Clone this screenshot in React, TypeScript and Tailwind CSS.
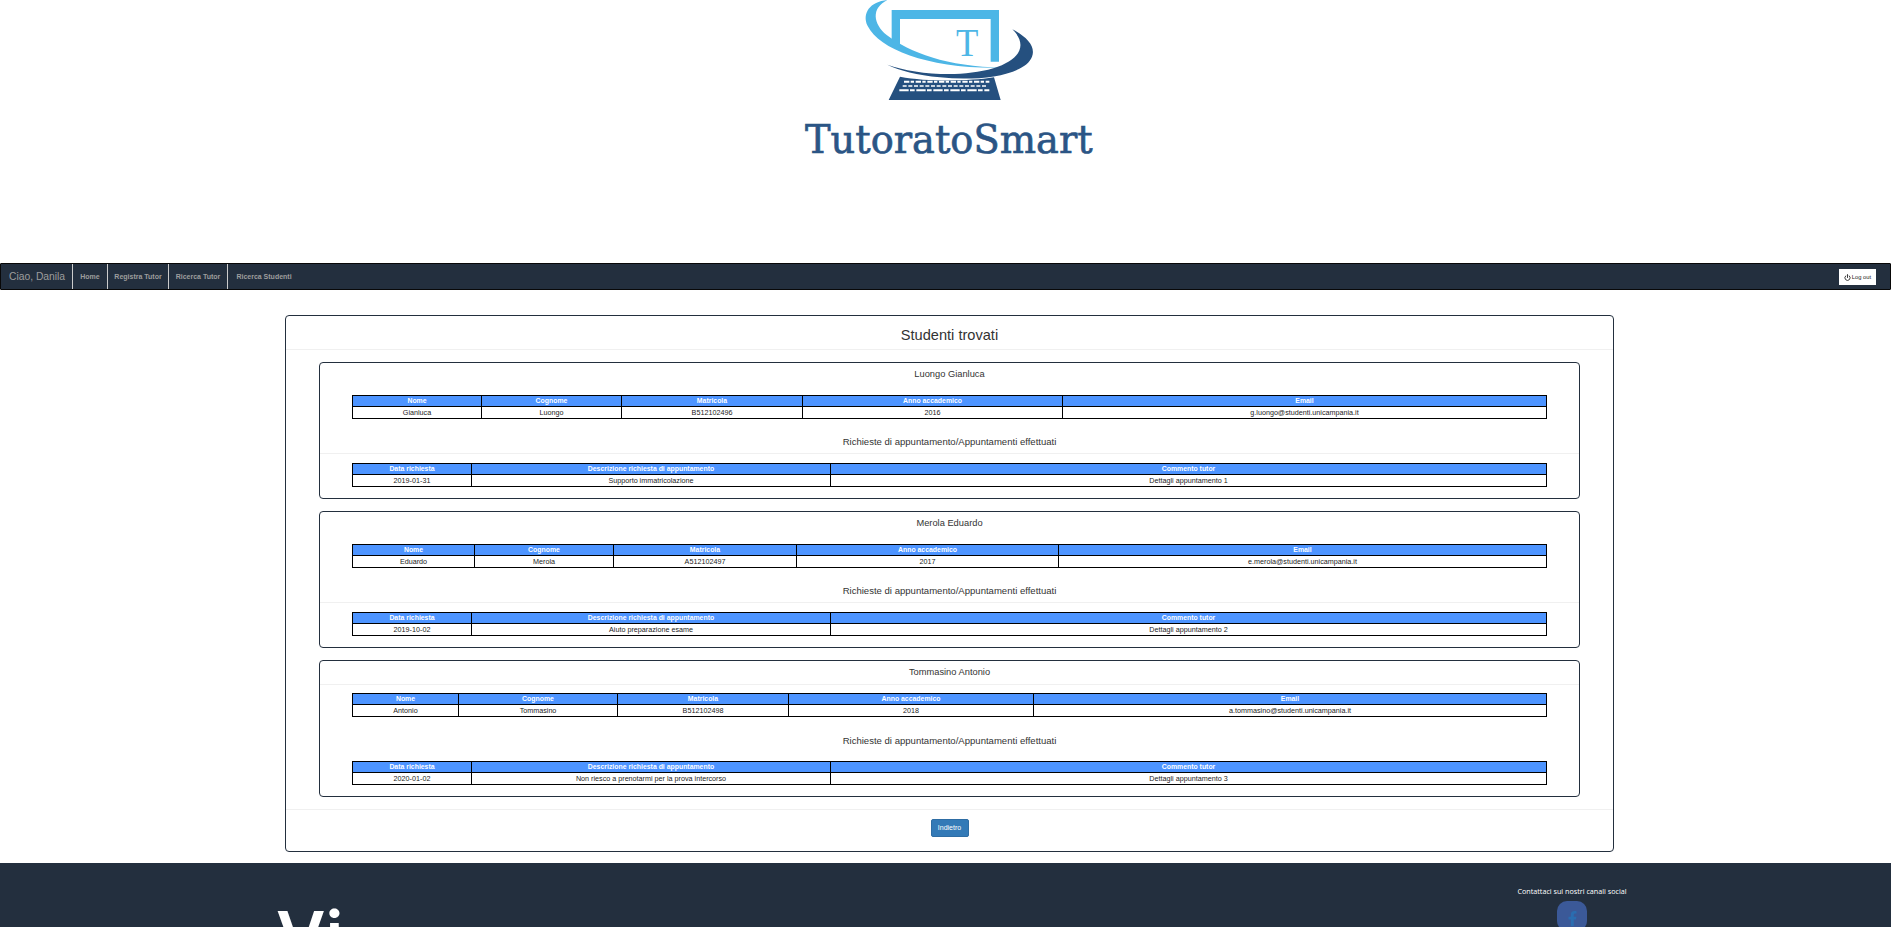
import { Power } from "lucide-react";
import { FaFacebookF } from "react-icons/fa";

const studentHead = ["Nome", "Cognome", "Matricola", "Anno accademico", "Email"];
const requestHead = ["Data richiesta", "Descrizione richiesta di appuntamento", "Commento tutor"];
const requestWidths = ["w-[119px]", "w-[359px]", "w-[716px]"];

const students = [
  {
    title: "Luongo Gianluca",
    row: ["Gianluca", "Luongo", "B512102496", "2016", "g.luongo@studenti.unicampania.it"],
    widths: ["w-[129px]", "w-[140px]", "w-[181px]", "w-[260px]", "w-[484px]"],
    request: ["2019-01-31", "Supporto immatricolazione", "Dettagli appuntamento 1"],
    titleLine: false,
    requestLine: true,
  },
  {
    title: "Merola Eduardo",
    row: ["Eduardo", "Merola", "A512102497", "2017", "e.merola@studenti.unicampania.it"],
    widths: ["w-[122px]", "w-[139px]", "w-[183px]", "w-[262px]", "w-[488px]"],
    request: ["2019-10-02", "Aiuto preparazione esame", "Dettagli appuntamento 2"],
    titleLine: false,
    requestLine: true,
  },
  {
    title: "Tommasino Antonio",
    row: ["Antonio", "Tommasino", "B512102498", "2018", "a.tommasino@studenti.unicampania.it"],
    widths: ["w-[106px]", "w-[159px]", "w-[171px]", "w-[245px]", "w-[513px]"],
    request: ["2020-01-02", "Non riesco a prenotarmi per la prova intercorso", "Dettagli appuntamento 3"],
    titleLine: true,
    requestLine: false,
  },
];

function DataTable({ head, row, widths }: { head: string[]; row: string[]; widths: string[] }) {
  return (
    <table className="w-[1194px] table-fixed border-collapse border border-black text-center leading-[10px] text-[#222]">
      <thead>
        <tr>
          {head.map((h, i) => (
            <th key={h} className={`${widths[i]} h-[11px] border border-black bg-[#4d94ff] p-0 text-[6.9px] font-bold text-white`}>
              {h}
            </th>
          ))}
        </tr>
      </thead>
      <tbody>
        <tr>
          {row.map((c) => (
            <td key={c} className="h-[11px] border border-black p-0 pt-[1px] text-[7.2px]">
              {c}
            </td>
          ))}
        </tr>
      </tbody>
    </table>
  );
}

function Logo() {
  return (
    <svg viewBox="0 0 1020 540" className="h-[180px] w-[340px]">
      <path d="M322,0 C270,5 245,40 263,78 C300,150 450,208 668,203 C500,200 390,158 320,105 C280,72 272,25 322,0 Z" fill="#4db6e6" />
      <path d="M335,30 H657 V185 H632 V57 H360 V142 L335,124 Z" fill="#4db6e6" />
      <text x="528" y="167" fontSize="122" textLength="67" lengthAdjust="spacingAndGlyphs" fontFamily="'Liberation Serif', serif" fill="#4db6e6">
        T
      </text>
      <path d="M697,88 C740,110 768,140 756,170 C735,225 600,245 480,232 C410,225 360,212 322,194 C400,222 540,235 640,205 C720,180 745,135 697,88 Z" fill="#25507f" />
      <path d="M360,230 L326,300 H662 L642,232 C560,245 440,245 360,230 Z" fill="#25507f" />
      <line x1="372" y1="245" x2="628" y2="245" stroke="#fff" strokeWidth="6" strokeDasharray="16 4 10 5" />
      <line x1="368" y1="258" x2="622" y2="258" stroke="#fff" strokeWidth="5" strokeDasharray="12 5" />
      <line x1="358" y1="271" x2="628" y2="271" stroke="#fff" strokeWidth="6" strokeDasharray="28 4 14 5" />
      <text x="75" y="458" fontSize="118" textLength="863" lengthAdjust="spacingAndGlyphs" fontFamily="'DejaVu Serif', serif" fill="#2b5585" stroke="#2b5585" strokeWidth="2">
        TutoratoSmart
      </text>
    </svg>
  );
}

export default function App() {
  return (
    <div className="flex h-screen flex-col overflow-hidden bg-white font-['Liberation_Sans',Arial,sans-serif] text-[#333]">
      <header className="flex h-[263px] shrink-0 justify-center pl-[9px]">
        <Logo />
      </header>

      <nav className="flex h-[27px] shrink-0 items-stretch rounded-[1px] border border-[#080808] bg-[#232f3e] text-[#9d9d9d]">
        <div className="flex w-[72px] items-center border-r border-[#cccccc] pl-[8px] pt-[1px] text-[10.3px]">Ciao, Danila</div>
        <a className="flex w-[35px] items-center justify-center border-r border-[#cccccc] pt-[1px] text-[7px] font-bold">Home</a>
        <a className="flex w-[61px] items-center justify-center border-r border-[#cccccc] pt-[1px] text-[7px] font-bold">Registra Tutor</a>
        <a className="flex w-[59px] items-center justify-center border-r border-[#cccccc] pt-[1px] text-[7px] font-bold">Ricerca Tutor</a>
        <a className="flex w-[72px] items-center justify-center pt-[1px] text-[7px] font-bold">Ricerca Studenti</a>
        <button className="my-auto ml-auto mr-[14px] flex h-[16px] w-[37px] items-center justify-center gap-[1px] bg-white pt-[1px] text-[5.8px] text-[#222]">
          <Power size={7} strokeWidth={3} />
          Log out
        </button>
      </nav>

      <main className="ml-[285px] mt-[25px] w-[1329px] shrink-0 rounded-[4px] border border-[#232f3e]">
        <div className="flex h-[34px] items-center justify-center border-b border-[#f0f0f0] pt-[6px] text-[14.6px] leading-none">
          Studenti trovati
        </div>
        <div className="flex flex-col gap-[12px] px-[33px] pb-[12px] pt-[12px]">
          {students.map((s) => (
            <section key={s.title} className="h-[137px] rounded-[4px] border border-[#232f3e]">
              <div className={`flex h-[24px] items-center justify-center text-[9.3px] ${s.titleLine ? "border-b border-[#f0f0f0]" : ""}`}>
                {s.title}
              </div>
              <div className="px-[32px] pt-[8px]">
                <DataTable head={studentHead} row={s.row} widths={s.widths} />
              </div>
              <div className={`flex h-[35px] items-center justify-center pt-[13px] text-[9.55px] ${s.requestLine ? "border-b border-[#f0f0f0]" : ""}`}>
                Richieste di appuntamento/Appuntamenti effettuati
              </div>
              <div className="px-[32px] pt-[9px]">
                <DataTable head={requestHead} row={s.request} widths={requestWidths} />
              </div>
            </section>
          ))}
        </div>
        <div className="flex h-[42px] items-start justify-center border-t border-[#f0f0f0] pt-[9px]">
          <button className="h-[18px] w-[38px] rounded-[2px] border border-[#2e6da4] bg-[#337ab7] text-[7px] text-white">Indietro</button>
        </div>
      </main>

      <footer className="mt-[11px] flex min-h-0 flex-1 justify-between overflow-hidden bg-[#232f3e] text-white">
        <div className="ml-[276px] pt-[32px] font-['Inter',sans-serif] text-[68px] font-semibold leading-[80px]">Vi</div>
        <div className="mr-[259px] flex w-[120px] flex-col items-center pt-[23px]">
          <p className="whitespace-nowrap font-['Open_Sans',sans-serif] text-[7.2px] leading-[10px]">Contattaci sui nostri canali social</p>
          <a className="mt-[5px] flex h-[30px] w-[30px] shrink-0 items-start justify-center rounded-[10px] bg-[#3b5998] pt-[10px] text-[#2a6db0]">
            <FaFacebookF size={15} />
          </a>
        </div>
      </footer>
    </div>
  );
}
